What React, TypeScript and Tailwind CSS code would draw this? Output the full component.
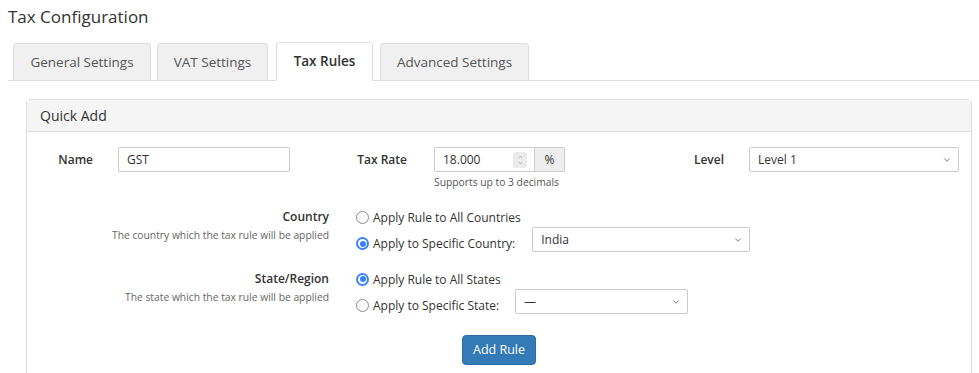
import { ChevronDown, ChevronUp } from "lucide-react";

const tabs = [
  { label: "General Settings", w: "w-[138px]" },
  { label: "VAT Settings", w: "w-[111px]" },
  { label: "Tax Rules", w: "w-[97px]", active: true },
  { label: "Advanced Settings", w: "w-[149px]" },
];

function Radio({ checked }: { checked?: boolean }) {
  if (checked) {
    return (
      <span className="w-[13px] h-[13px] rounded-full bg-[#3b82f6] flex items-center justify-center shrink-0">
        <span className="w-[9px] h-[9px] rounded-full bg-white flex items-center justify-center">
          <span className="w-[6px] h-[6px] rounded-full bg-[#3b82f6]" />
        </span>
      </span>
    );
  }
  return <span className="w-[13px] h-[13px] rounded-full border border-[#8a8a8a] bg-white shrink-0" />;
}

function Select({ value, w }: { value: string; w: string }) {
  return (
    <div className={`${w} h-[25px] border border-[#ccc] rounded-[2px] bg-white flex items-center justify-between pl-[8px] pr-[6px] text-[12px] text-[#333]`}>
      <span>{value}</span>
      <ChevronDown className="w-[10px] h-[10px] text-[#666]" strokeWidth={2} />
    </div>
  );
}

export default function App() {
  return (
    <div className="w-[979px] h-[373px] bg-white overflow-hidden font-['Open_Sans',sans-serif] text-[#333]">
      {/* Title */}
      <h1 className="pl-[8px] pt-[5px] text-[17px] leading-[24px]">Tax Configuration</h1>

      {/* Tabs */}
      <div className="mt-[14px] ml-[8px] border-b border-[#ddd] flex items-end gap-[6px] pl-[5px] h-[38px]">
        {tabs.map((t) =>
          t.active ? (
            <div
              key={t.label}
              className={`${t.w} h-[39px] -mb-px bg-white border border-[#ddd] border-b-white rounded-t-[4px] flex items-center justify-center text-[13.5px] font-semibold text-[#333] ml-[2px] mr-[1px]`}
            >
              {t.label}
            </div>
          ) : (
            <div
              key={t.label}
              className={`${t.w} h-[37px] bg-[#f0f0f0] border border-[#ddd] border-b-0 rounded-t-[4px] flex items-center justify-center text-[13.5px] text-[#555]`}
            >
              {t.label}
            </div>
          )
        )}
      </div>

      {/* Panel */}
      <div className="ml-[26px] mr-[7px] mt-[18px] border border-[#ddd] rounded-t-[4px]">
        <div className="h-[32px] bg-[#f5f5f5] border-b border-[#ddd] flex items-center pl-[13px] text-[14px] text-[#333]">
          Quick Add
        </div>

        <div className="pt-[15px] pb-[12px]">
          {/* Row 1 */}
          <div className="flex text-[12px]">
            <div className="w-[315px] flex items-start">
              <div className="w-[66px] h-[25px] flex items-center justify-end font-semibold">Name</div>
              <div className="ml-[25px] w-[172px] h-[25px] border border-[#ccc] rounded-[2px] flex items-center pl-[8px]">GST</div>
            </div>
            <div className="w-[315px] flex items-start">
              <div className="w-[65px] h-[25px] flex items-center justify-end font-semibold">Tax Rate</div>
              <div className="ml-[27px] flex flex-col">
                <div className="flex h-[25px]">
                  <div className="w-[101px] border border-[#ccc] rounded-l-[2px] flex items-center justify-between pl-[8px] pr-[7px]">
                    <span>18.000</span>
                    <span className="w-[14px] h-[16px] bg-[#ebebeb] rounded-[2px] flex flex-col items-center justify-center">
                      <ChevronUp className="w-[9px] h-[6px] text-[#777]" strokeWidth={2} />
                      <ChevronDown className="w-[9px] h-[6px] text-[#777]" strokeWidth={2} />
                    </span>
                  </div>
                  <div className="w-[30px] bg-[#eee] border border-l-0 border-[#ccc] rounded-r-[2px] flex items-center justify-center">%</div>
                </div>
                <div className="mt-[3px] text-[10.3px] text-[#555] leading-[14px]">Supports up to 3 decimals</div>
              </div>
            </div>
            <div className="w-[314px] flex items-start">
              <div className="w-[67px] h-[25px] flex items-center justify-end font-semibold">Level</div>
              <div className="ml-[25px]">
                <Select value="Level 1" w="w-[210px]" />
              </div>
            </div>
          </div>

          {/* Country */}
          <div className="flex mt-[19px] text-[12px] leading-[17px]">
            <div className="w-[302px] text-right">
              <div className="font-semibold leading-[18px]">Country</div>
              <div className="text-[10.3px] text-[#666] leading-[16px] mt-[1px]">The country which the tax rule will be applied</div>
            </div>
            <div className="ml-[27px] flex flex-col">
              <div className="flex items-center gap-[4px] h-[18px]">
                <Radio />
                <span>Apply Rule to All Countries</span>
              </div>
              <div className="flex items-start mt-[1px] h-[25px]">
                <div className="flex items-center gap-[4px] pt-[8px]">
                  <Radio checked />
                  <span>Apply to Specific Country:</span>
                </div>
                <div className="ml-[17px]">
                  <Select value="India" w="w-[218px]" />
                </div>
              </div>
            </div>
          </div>

          {/* State */}
          <div className="flex mt-[18px] text-[12px] leading-[17px]">
            <div className="w-[302px] text-right">
              <div className="font-semibold leading-[18px]">State/Region</div>
              <div className="text-[10.3px] text-[#666] leading-[16px] mt-[1px]">The state which the tax rule will be applied</div>
            </div>
            <div className="ml-[27px] flex flex-col">
              <div className="flex items-center gap-[4px] h-[18px]">
                <Radio checked />
                <span>Apply Rule to All States</span>
              </div>
              <div className="flex items-start mt-[1px] h-[25px]">
                <div className="flex items-center gap-[4px] pt-[8px]">
                  <Radio />
                  <span>Apply to Specific State:</span>
                </div>
                <div className="ml-[16px]">
                  <Select value="—" w="w-[173px]" />
                </div>
              </div>
            </div>
          </div>

          {/* Button */}
          <div className="flex justify-center mt-[21px]">
            <button className="w-[74px] h-[30px] bg-[#337ab7] border border-[#2e6da4] rounded-[4px] text-white text-[12.5px]">
              Add Rule
            </button>
          </div>
        </div>
      </div>
    </div>
  );
}
